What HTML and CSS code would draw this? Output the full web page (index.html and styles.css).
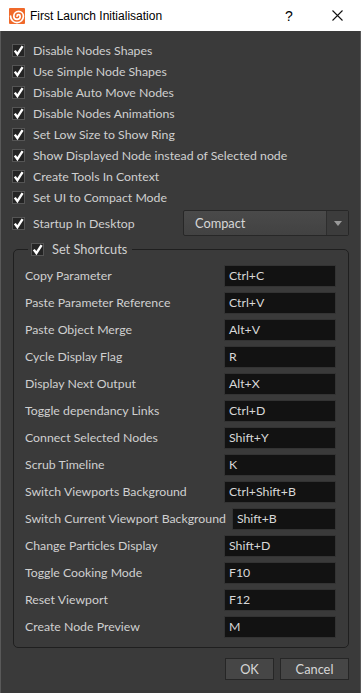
FILE: index.html
```html
<!DOCTYPE html>
<html>
<head>
<meta charset="utf-8">
<link rel="stylesheet" href="styles.css">
</head>
<body>
<div class="window">
  <div class="titlebar">
    <svg class="logo" width="16" height="16" viewBox="0 0 16 16">
      <rect width="16" height="16" rx="1" fill="#f0692a"/>
      <g transform="translate(8 8.2) scale(1.6) translate(-7 -8.5)">
        <path d="M7 8.5 A1 1 0 0 1 9 8.5 A2 2 0 0 1 5 8.5 A3 3 0 0 1 11 8.5 A4 4 0 0 1 3 8.5" fill="none" stroke="#fff" stroke-width="1.05" stroke-linecap="round"/>
      </g>
    </svg>
    <span class="title">First Launch Initialisation</span>
    <span class="help">?</span>
    <svg class="close" width="11" height="11" viewBox="0 0 11 11"><path d="M0.5 0.5 L10.5 10.5 M10.5 0.5 L0.5 10.5" stroke="#111" stroke-width="1.1"/></svg>
  </div>
  <div class="content">
    <div class="check-row"><span class="cb"><svg width="13" height="13" viewBox="0 0 13 13"><path d="M2.8 6.6 L5.4 10.2 L10.6 2.2" fill="none" stroke="#fff" stroke-width="2.4"/></svg></span>Disable Nodes Shapes</div>
    <div class="check-row"><span class="cb"><svg width="13" height="13" viewBox="0 0 13 13"><path d="M2.8 6.6 L5.4 10.2 L10.6 2.2" fill="none" stroke="#fff" stroke-width="2.4"/></svg></span>Use Simple Node Shapes</div>
    <div class="check-row"><span class="cb"><svg width="13" height="13" viewBox="0 0 13 13"><path d="M2.8 6.6 L5.4 10.2 L10.6 2.2" fill="none" stroke="#fff" stroke-width="2.4"/></svg></span>Disable Auto Move Nodes</div>
    <div class="check-row"><span class="cb"><svg width="13" height="13" viewBox="0 0 13 13"><path d="M2.8 6.6 L5.4 10.2 L10.6 2.2" fill="none" stroke="#fff" stroke-width="2.4"/></svg></span>Disable Nodes Animations</div>
    <div class="check-row"><span class="cb"><svg width="13" height="13" viewBox="0 0 13 13"><path d="M2.8 6.6 L5.4 10.2 L10.6 2.2" fill="none" stroke="#fff" stroke-width="2.4"/></svg></span>Set Low Size to Show Ring</div>
    <div class="check-row"><span class="cb"><svg width="13" height="13" viewBox="0 0 13 13"><path d="M2.8 6.6 L5.4 10.2 L10.6 2.2" fill="none" stroke="#fff" stroke-width="2.4"/></svg></span>Show Displayed Node instead of Selected node</div>
    <div class="check-row"><span class="cb"><svg width="13" height="13" viewBox="0 0 13 13"><path d="M2.8 6.6 L5.4 10.2 L10.6 2.2" fill="none" stroke="#fff" stroke-width="2.4"/></svg></span>Create Tools In Context</div>
    <div class="check-row"><span class="cb"><svg width="13" height="13" viewBox="0 0 13 13"><path d="M2.8 6.6 L5.4 10.2 L10.6 2.2" fill="none" stroke="#fff" stroke-width="2.4"/></svg></span>Set UI to Compact Mode</div>
    <div class="check-row startup"><span class="cb"><svg width="13" height="13" viewBox="0 0 13 13"><path d="M2.8 6.6 L5.4 10.2 L10.6 2.2" fill="none" stroke="#fff" stroke-width="2.4"/></svg></span>Startup In Desktop
      <div class="combo"><span class="combo-text">Compact</span><span class="combo-arrow"><svg width="8" height="5" viewBox="0 0 8 5"><path d="M0 0 H8 L4 5 Z" fill="#9a9a9a"/></svg></span></div>
    </div>
    <fieldset class="group">
      <legend class="legend"><span class="cb"><svg width="13" height="13" viewBox="0 0 13 13"><path d="M2.8 6.6 L5.4 10.2 L10.6 2.2" fill="none" stroke="#fff" stroke-width="2.4"/></svg></span>Set Shortcuts</legend>
      <div class="sc-row"><span class="sc-label">Copy Parameter</span><span class="field">Ctrl+C</span></div>
      <div class="sc-row"><span class="sc-label">Paste Parameter Reference</span><span class="field">Ctrl+V</span></div>
      <div class="sc-row"><span class="sc-label">Paste Object Merge</span><span class="field">Alt+V</span></div>
      <div class="sc-row"><span class="sc-label">Cycle Display Flag</span><span class="field">R</span></div>
      <div class="sc-row"><span class="sc-label">Display Next Output</span><span class="field">Alt+X</span></div>
      <div class="sc-row"><span class="sc-label">Toggle dependancy Links</span><span class="field">Ctrl+D</span></div>
      <div class="sc-row"><span class="sc-label">Connect Selected Nodes</span><span class="field">Shift+Y</span></div>
      <div class="sc-row"><span class="sc-label">Scrub Timeline</span><span class="field">K</span></div>
      <div class="sc-row"><span class="sc-label">Switch Viewports Background</span><span class="field">Ctrl+Shift+B</span></div>
      <div class="sc-row"><span class="sc-label">Switch Current Viewport Background</span><span class="field">Shift+B</span></div>
      <div class="sc-row"><span class="sc-label">Change Particles Display</span><span class="field">Shift+D</span></div>
      <div class="sc-row"><span class="sc-label">Toggle Cooking Mode</span><span class="field">F10</span></div>
      <div class="sc-row"><span class="sc-label">Reset Viewport</span><span class="field">F12</span></div>
      <div class="sc-row"><span class="sc-label">Create Node Preview</span><span class="field">M</span></div>
    </fieldset>
    <div class="buttons">
      <span class="btn ok">OK</span>
      <span class="btn cancel">Cancel</span>
    </div>
  </div>
</div>
</body>
</html>
```

FILE: styles.css
```css
* { box-sizing: border-box; }
html, body { margin: 0; padding: 0; background: #3a3a3a; }
body { width: 361px; height: 693px; overflow: hidden; font-family: Lato, "Noto Sans", sans-serif; font-size: 12.3px; color: #d0d0d0; }

.window { width: 361px; height: 693px; display: flex; flex-direction: column; }

.titlebar {
  height: 31px; background: #fff; display: flex; align-items: center;
  font-family: "Liberation Sans", Arial, sans-serif; font-size: 12px; color: #000;
  padding-left: 9px; flex: none;
}
.logo { margin-right: 5px; margin-top: 1px; }
.title { flex: 1; }
.help { font-size: 14px; width: 10px; margin-right: 37px; }
.close { margin-right: 18px; }

.content {
  flex: 1; display: flex; flex-direction: column;
  background: #3a3a3a;
  border: 1px solid #595959; border-top: none;
  padding: 9px 11px 13px 11px;
}

.check-row { height: 21px; display: flex; align-items: center; white-space: nowrap; }
.cb { width: 13px; height: 13px; background: #242424; border: 1px solid #555; margin-right: 8px; display: inline-flex; flex: none; position: relative; }
.cb svg { position: absolute; left: -1px; top: -1px; }

.startup { height: 26px; margin-top: 2px; }
.combo {
  margin-left: auto; width: 166px; height: 26px; display: flex;
  border: 1px solid #272727; border-radius: 2px;
  background: linear-gradient(#4a4a4a, #424242);
}
.combo-text { flex: 1; display: flex; align-items: center; padding-left: 11px; font-size: 12.8px; color: #d6d6d6; }
.combo-arrow { width: 22px; display: flex; align-items: center; justify-content: center; background: #3c3c3c; border-left: 1px solid #2e2e2e; }

.group {
  margin: 5px 0 0 1px; width: 336px;
  border: 1px solid #1f1f1f; border-radius: 5px;
  padding: 5px 12px 7px 11px;
}
.legend { padding: 0 5px 0 3px; margin-left: 3px; display: flex; align-items: center; height: 16px; font-size: 12.8px; color: #d0d0d0; }
.legend .cb { margin-right: 8px; }

.sc-row { height: 27px; display: flex; align-items: center; gap: 6px; }
.sc-label { flex: 1 0 auto; white-space: nowrap; }
.field {
  flex: 0 1 112px; min-width: 0; height: 22px; background: #121212;
  border: 1px solid #333; display: flex; align-items: center; padding-left: 4px; color: #d8d8d8;
}

.buttons { margin-top: 10px; display: flex; justify-content: flex-end; gap: 6px; }
.btn {
  height: 22px; display: flex; align-items: center; justify-content: center;
  background: #464646; border: 1px solid #262626; color: #d6d6d6; font-size: 12.8px;
}
.ok { width: 49px; }
.cancel { width: 69px; }
```
